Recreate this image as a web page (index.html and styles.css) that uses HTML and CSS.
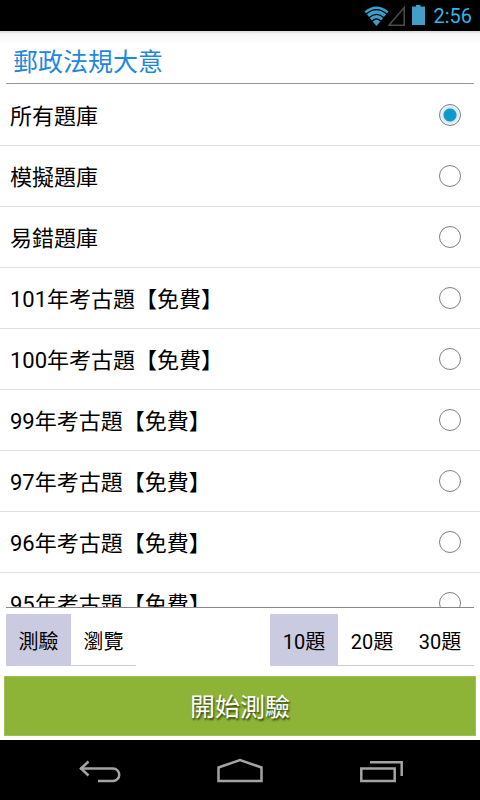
FILE: index.html
```html
<!DOCTYPE html>
<html lang="zh-Hant">
<head>
<meta charset="utf-8">
<meta name="viewport" content="width=device-width, initial-scale=1">
<title>郵政法規大意</title>
<link rel="stylesheet" href="styles.css">
</head>
<body>
<header class="status">
  <svg class="status-icons" width="64" height="24" viewBox="0 0 64 24" aria-hidden="true">
    <path d="M12.500 22L0.500 7.500Q12.500 -2.500 24.500 7.500Z" fill="#3b9fc9" />
    <g fill="none" stroke="#000" stroke-width="1.300">
      <path d="M2 10.200Q12.500 1.200 23 10.200" />
      <path d="M5 13.800Q12.500 7 20 13.800" />
      <path d="M8 17.200Q12.500 12.800 17 17.200" />
    </g>
    <path d="M40.200 3.500V21.200H25Z" fill="none" stroke="#4c4c4c" stroke-width="1.500" />
    <path d="M52 1h4.500v1.500H61V21H48V2.500h4z" fill="#439fc6" />
  </svg>
  <time class="clock">2:56</time>
</header>
<main class="app">
  <h1 class="title">郵政法規大意</h1>
  <div class="list">
    <label class="row"><span class="name">所有題庫</span><input class="radio" type="radio" name="bank" checked></label>
    <label class="row"><span class="name">模擬題庫</span><input class="radio" type="radio" name="bank"></label>
    <label class="row"><span class="name">易錯題庫</span><input class="radio" type="radio" name="bank"></label>
    <label class="row"><span class="name">101年考古題【免費】</span><input class="radio" type="radio" name="bank"></label>
    <label class="row"><span class="name">100年考古題【免費】</span><input class="radio" type="radio" name="bank"></label>
    <label class="row"><span class="name">99年考古題【免費】</span><input class="radio" type="radio" name="bank"></label>
    <label class="row"><span class="name">97年考古題【免費】</span><input class="radio" type="radio" name="bank"></label>
    <label class="row"><span class="name">96年考古題【免費】</span><input class="radio" type="radio" name="bank"></label>
    <label class="row"><span class="name">95年考古題【免費】</span><input class="radio" type="radio" name="bank"></label>
  </div>
  <div class="options">
    <div class="segments">
      <button class="segment selected" type="button" aria-pressed="true">測驗</button>
      <button class="segment" type="button" aria-pressed="false">瀏覽</button>
    </div>
    <div class="segments">
      <button class="segment wide selected" type="button" aria-pressed="true">10題</button>
      <button class="segment wide" type="button" aria-pressed="false">20題</button>
      <button class="segment wide" type="button" aria-pressed="false">30題</button>
    </div>
  </div>
  <button class="start" type="button">開始測驗</button>
</main>
<nav class="navbar">
  <button class="nav-button" type="button" aria-label="返回">
    <svg width="48" height="30" viewBox="0 0 48 30" fill="none" stroke="#a3a3a3" stroke-width="2.500">
      <path d="M5 13.500H38A6.250 6.250 0 0 1 38 26H23" />
      <path d="M13.500 6.500L6 13.500L13.500 20.500" />
    </svg>
  </button>
  <button class="nav-button" type="button" aria-label="主畫面">
    <svg width="48" height="30" viewBox="0 0 48 30" fill="none" stroke="#a3a3a3" stroke-width="2.500">
      <path d="M2.500 26V12.500L24 5L45.500 12.500V26Z" />
    </svg>
  </button>
  <button class="nav-button" type="button" aria-label="最近使用">
    <svg width="48" height="30" viewBox="0 0 48 30" fill="none" stroke="#a3a3a3" stroke-width="2.500">
      <path d="M4.300 13.500H37.700V26H4.300Z" />
      <path d="M13 7.300H44.700V21" />
    </svg>
  </button>
</nav>
</body>
</html>
```
FILE: styles.css
```css
* {
  box-sizing: border-box;
}

body {
  margin: 0;
  height: 100vh;
  display: flex;
  flex-direction: column;
  background: #fff;
  color: #000;
  font-family: Roboto, "Noto Sans CJK TC", sans-serif;
}

button {
  margin: 0;
  padding: 0;
  border: 0;
  background: none;
  color: inherit;
  font-family: inherit;
}

.status {
  flex: none;
  height: 31px;
  padding: 0 8px;
  display: flex;
  justify-content: flex-end;
  align-items: center;
  gap: 5px;
  background: #000;
}

.clock {
  color: #33b5e5;
  font-size: 20px;
  line-height: 24px;
}

.app {
  flex: 1;
  min-height: 0;
  display: flex;
  flex-direction: column;
  background: linear-gradient(#d8d8d8, #f7f7f7 3px, #fff 14px);
}

.title {
  flex: none;
  margin: 0 6px;
  padding: 0 7px;
  height: 53px;
  border-bottom: 1px solid #9c9496;
  color: #1e88e0;
  font-size: 25px;
  font-weight: 400;
  line-height: 64px;
}

.list {
  flex: 1;
  min-height: 0;
  padding-top: 1px;
  overflow-y: auto;
  scrollbar-width: none;
}

.row {
  display: flex;
  justify-content: space-between;
  align-items: center;
  height: 61px;
  padding: 0 19px 0 10px;
  border-bottom: 1px solid #e0e0e0;
}

.name {
  padding-top: 4px;
  font-size: 22px;
  line-height: 32px;
}

.radio {
  appearance: none;
  flex: none;
  width: 22px;
  height: 22px;
  margin: 0;
  border: 1px solid #808080;
  border-radius: 50%;
  background: #fff;
}

.radio:checked {
  background: radial-gradient(circle, #0a9bcd 5px, #3a8fb0 6px, #c9ecf8 7px, #e8f7fc 10px);
}

.options {
  flex: none;
  display: flex;
  justify-content: space-between;
  margin: 0 6px;
  padding: 6px 0 10px;
  border-top: 1px solid #8c8486;
}

.segments {
  display: flex;
  border-bottom: 1px solid #cacae0;
}

.segment {
  width: 65px;
  height: 51px;
  padding-top: 4px;
  font-size: 20px;
  line-height: 28px;
}

.segment.wide {
  width: 68px;
}

.segment.selected {
  background: #cacae0;
}

.start {
  flex: none;
  height: 60px;
  margin: 0 4px 4px;
  padding-top: 4px;
  border: 1px solid #9fc04f;
  background: #8db436;
  color: #fff;
  font-size: 25px;
  line-height: 36px;
  text-shadow: 1px 2px 2px #33420f;
}

.navbar {
  flex: none;
  height: 60px;
  padding: 0 29px;
  display: flex;
  background: #000;
}

.nav-button {
  flex: 1;
  display: flex;
  justify-content: center;
  align-items: center;
}
```
